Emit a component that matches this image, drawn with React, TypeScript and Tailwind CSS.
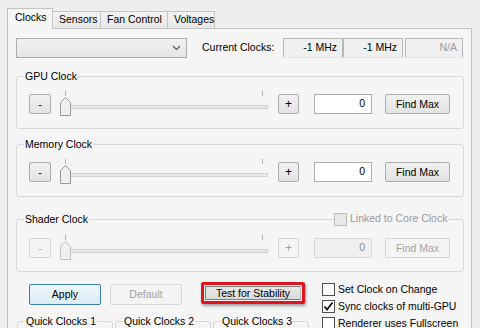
import type { ReactNode } from 'react'

const btnBase = 'flex items-center justify-center border rounded-[2px] leading-none shrink-0'
const btnOn = 'border-[#acacac] bg-linear-to-b from-[#f0f0f0] to-[#e3e3e3] text-black'
const btnOff = 'border-[#d5d5d5] bg-[#f4f4f4] text-[#a3a3a3]'

function Button({
  children,
  disabled,
  className = '',
}: {
  children: ReactNode
  disabled?: boolean
  className?: string
}) {
  return (
    <button type="button" className={`${btnBase} ${disabled ? btnOff : btnOn} ${className}`}>
      {children}
    </button>
  )
}

function Slider({ disabled }: { disabled?: boolean }) {
  const edge = disabled ? '#c2c2c2' : '#999999'
  return (
    <svg width="208" height="20" viewBox="0 0 208 20" className="shrink-0 overflow-visible ml-[9px]">
      <line x1="5.5" y1="-3" x2="5.5" y2="2" stroke="#b4b4b4" />
      <line x1="202.5" y1="-3" x2="202.5" y2="2" stroke="#b4b4b4" />
      <rect x="10.5" y="11.5" width="197" height="3" fill="#e9e9e9" stroke="#d2d2d2" />
      <path d="M5.5 3.5 L10.5 8.5 V21.5 H0.5 V8.5 Z" fill="#efefef" stroke={edge} />
    </svg>
  )
}

function Checkbox({ checked, disabled }: { checked?: boolean; disabled?: boolean }) {
  return (
    <span
      className={`flex items-center justify-center w-[13px] h-[13px] border shrink-0 ${
        disabled ? 'border-[#bcbcbc] bg-[#e8e8e8]' : 'border-[#4d4d4d] bg-white'
      }`}
    >
      {checked && (
        <svg width="11" height="11" viewBox="0 0 11 11">
          <path d="M1.5 5.5 L4 8.5 L9.5 1.5" fill="none" stroke="#111" strokeWidth="1.8" />
        </svg>
      )}
    </span>
  )
}

function GroupBox({
  title,
  className = '',
  extra,
  children,
}: {
  title: string
  className?: string
  extra?: ReactNode
  children?: ReactNode
}) {
  return (
    <div className={`relative border border-[#d8d8d8] rounded-[3px] ${className}`}>
      <span className="absolute left-[7px] top-[-8px] px-px leading-[14px] bg-[#f5f5f5]">{title}</span>
      {extra}
      {children}
    </div>
  )
}

function ClockRow({ disabled }: { disabled?: boolean }) {
  return (
    <div className="flex items-center h-[20px] pl-[12px]">
      <Button disabled={disabled} className="w-[22px] h-[20px]">
        -
      </Button>
      <Slider disabled={disabled} />
      <Button disabled={disabled} className="w-[21px] h-[20px] ml-[10px] text-[12px]">
        +
      </Button>
      <div
        className={`w-[58px] h-[20px] ml-[15px] border flex items-center justify-end pr-[6px] ${
          disabled ? 'border-[#d9d9d9] bg-[#f0f0f0] text-[#8a8a8a]' : 'border-[#abadb3] bg-white'
        }`}
      >
        0
      </div>
      <Button disabled={disabled} className="w-[65px] h-[20px] ml-[13px]">
        Find Max
      </Button>
    </div>
  )
}

const tabs = ['Sensors', 'Fan Control', 'Voltages']
const tabWidths = ['w-[49px]', 'w-[68px]', 'w-[48px]']

export default function App() {
  return (
    <div className="w-[480px] h-[328px] overflow-hidden bg-[#eeeeee] text-black text-[10.5px] font-['Liberation_Sans',Arial,sans-serif]">
      {/* Tabs */}
      <div className="flex items-end pl-[7px] pt-[8px]">
        <div className="relative z-10 -mb-px w-[46px] h-[21px] border border-b-0 border-[#c4c4c4] bg-[#f5f5f5] flex items-center pl-[7px] pb-[2px]">
          Clocks
        </div>
        {tabs.map((t, i) => (
          <div
            key={t}
            className={`-ml-px h-[17px] border border-b-0 border-[#c4c4c4] bg-linear-to-b from-[#f2f2f2] to-[#e8e8e8] flex items-center pl-[6px] ${tabWidths[i]}`}
          >
            {t}
          </div>
        ))}
      </div>

      {/* Panel */}
      <div className="ml-[7px] w-[465px] h-[320px] border border-b-0 border-[#c4c4c4] bg-[#f5f5f5] pl-[8px] pr-[7px]">
        <div className="flex items-center mt-[9px] h-[20px]">
          <div className="w-[171px] h-[20px] border border-[#acacac] bg-linear-to-b from-[#f0f0f0] to-[#e5e5e5] flex items-center justify-end pr-[5px]">
            <svg width="9" height="6" viewBox="0 0 9 6">
              <path d="M1 1 L4.5 4.5 L8 1" fill="none" stroke="#555" strokeWidth="1.2" />
            </svg>
          </div>
          <span className="w-[81px] ml-[15px]">Current Clocks:</span>
          <div className="w-[60px] h-[20px] border border-[#b9b9b9] border-b-[#e6e6e6] bg-[#f0f0f0] flex items-center justify-end pr-[5px]">
            -1 MHz
          </div>
          <div className="w-[60px] h-[20px] border border-[#b9b9b9] border-b-[#e6e6e6] bg-[#f0f0f0] flex items-center justify-end pr-[5px]">
            -1 MHz
          </div>
          <div className="w-[58px] h-[20px] ml-[2px] border border-[#b9b9b9] border-b-[#e6e6e6] bg-[#f0f0f0] flex items-center justify-end pr-[5px] text-[#9a9a9a]">
            N/A
          </div>
        </div>

        <GroupBox title="GPU Clock" className="mt-[18px] pt-[17px] pb-[14px]">
          <ClockRow />
        </GroupBox>

        <GroupBox title="Memory Clock" className="mt-[15px] pt-[17px] pb-[14px]">
          <ClockRow />
        </GroupBox>

        <GroupBox
          title="Shader Clock"
          className="mt-[22px] pt-[18px] pb-[13px]"
          extra={
            <span className="absolute left-[317px] top-[-8px] h-[14px] flex items-center gap-[3px] pr-px bg-[#f5f5f5] text-[#9a9a9a]">
              <Checkbox disabled />
              Linked to Core Clock
            </span>
          }
        >
          <ClockRow disabled />
        </GroupBox>

        {/* Bottom */}
        <div className="flex">
          <div className="w-[306px] shrink-0">
            <div className="flex items-center mt-[12px] h-[21px]">
              <button
                type="button"
                className="ml-[13px] w-[72px] h-[21px] border border-[#3c7fb1] rounded-[2px] bg-linear-to-b from-[#eef6fb] to-[#dcecf7] leading-none"
              >
                Apply
              </button>
              <Button disabled className="ml-[9px] w-[72px] h-[21px]">
                Default
              </Button>
              <div className="ml-[19px] w-[104px] h-[22px] -mt-[3px] border-[3px] border-[#e3131b] rounded-[2px] bg-[#f5f5f5] p-px shadow-[1px_2px_3px_rgba(0,0,0,0.35)]">
                <div className="w-full h-full border border-[#7d7d7d] border-r-[#bdbdbd] bg-linear-to-b from-[#e9e9e9] to-[#dadada] flex items-center justify-center leading-none">
                  Test for Stability
                </div>
              </div>
            </div>
            <div className="flex gap-[2px] mt-[16px] ml-px">
              <GroupBox title="Quick Clocks 1" className="w-[96px] h-[30px]" />
              <GroupBox title="Quick Clocks 2" className="w-[96px] h-[30px]" />
              <GroupBox title="Quick Clocks 3" className="w-[96px] h-[30px]" />
            </div>
          </div>
          <div className="mt-[9px] flex flex-col">
            <label className="flex items-center gap-[3px] h-[17px]">
              <Checkbox />
              Set Clock on Change
            </label>
            <label className="flex items-center gap-[3px] h-[17px]">
              <Checkbox checked />
              Sync clocks of multi-GPU
            </label>
            <label className="flex items-center gap-[3px] h-[17px]">
              <Checkbox />
              Renderer uses Fullscreen
            </label>
          </div>
        </div>
      </div>
    </div>
  )
}
